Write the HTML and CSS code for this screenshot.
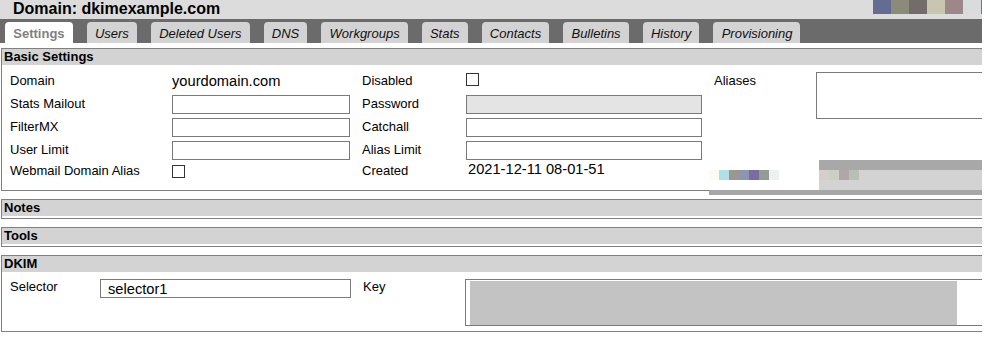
FILE: index.html
```html
<!DOCTYPE html>
<html lang="en">
<head>
    <meta charset="UTF-8">
    <title>Domain: dkimexample.com</title>
    <link rel="stylesheet" href="styles.css">
</head>
<body>
<div class="page">
    <div class="titlebar">
        <h1 class="title">Domain: dkimexample.com</h1>
        <div class="swatches">
            <span class="sw sw1"></span>
            <span class="sw sw2"></span>
            <span class="sw sw3"></span>
            <span class="sw sw4"></span>
            <span class="sw sw5"></span>
            <span class="sw sw6"></span>
        </div>
    </div>
    <ul class="tabs">
        <li class="tab active">Settings</li>
        <li class="tab">Users</li>
        <li class="tab">Deleted Users</li>
        <li class="tab">DNS</li>
        <li class="tab">Workgroups</li>
        <li class="tab">Stats</li>
        <li class="tab">Contacts</li>
        <li class="tab">Bulletins</li>
        <li class="tab">History</li>
        <li class="tab">Provisioning</li>
    </ul>

    <div class="panel">
        <div class="panel-head">Basic Settings</div>
        <div class="fields basic">
            <div class="label first">Domain</div>
            <div class="value">yourdomain.com</div>
            <div class="label">Disabled</div>
            <div><input type="checkbox" class="check"></div>
            <div class="label">Aliases</div>
            <textarea class="aliases"></textarea>

            <div class="label first">Stats Mailout</div>
            <div><input type="text" class="text"></div>
            <div class="label">Password</div>
            <div><input type="text" class="text wide" disabled></div>

            <div class="label first">FilterMX</div>
            <div><input type="text" class="text"></div>
            <div class="label">Catchall</div>
            <div><input type="text" class="text wide"></div>

            <div class="label first">User Limit</div>
            <div><input type="text" class="text"></div>
            <div class="label">Alias Limit</div>
            <div><input type="text" class="text wide"></div>

            <div class="label first low">Webmail Domain Alias</div>
            <div><input type="checkbox" class="check"></div>
            <div class="label low">Created</div>
            <div class="value date">2021-12-11 08-01-51</div>
        </div>

        <!-- redacted bits of the screenshot -->
        <div class="blur-strip">
            <span class="px" style="background:#fdfaf6"></span>
            <span class="px" style="background:#b0dfe9"></span>
            <span class="px" style="background:#9a9690"></span>
            <span class="px" style="background:#8c96b0"></span>
            <span class="px" style="background:#7a6ca0"></span>
            <span class="px" style="background:#949a98"></span>
            <span class="px" style="background:#eef0ee"></span>
        </div>
        <div class="blur-block">
            <span class="px" style="background:#d4d0c8"></span>
            <span class="px" style="background:#cccfc6"></span>
            <span class="px" style="background:#b0a8a8"></span>
            <span class="px" style="background:#b8bfb6"></span>
        </div>
        <div class="blur-bar"></div>
    </div>

    <div class="panel closed">
        <div class="panel-head">Notes</div>
    </div>

    <div class="panel closed">
        <div class="panel-head">Tools</div>
    </div>

    <div class="panel">
        <div class="panel-head">DKIM</div>
        <div class="fields dkim">
            <div class="label">Selector</div>
            <div><input type="text" class="text sel" value="selector1"></div>
            <div class="label">Key</div>
            <div class="keybox"><div class="keyblur"></div></div>
        </div>
    </div>
</div>
</body>
</html>
```

FILE: styles.css
```css
body {
    margin: 0;
    font-family: "Liberation Sans", Arial, sans-serif;
    font-size: 13px;
    color: #000;
    background: #fff;
}
.page {
    width: 982px;
    overflow: hidden;
}

/* title */
.titlebar {
    display: flex;
    justify-content: space-between;
    height: 19px;
    background: #dcdcdc;
}
.title {
    margin: 0;
    padding-left: 13px;
    font-size: 16px;
    line-height: 17px;
    font-weight: bold;
}
.swatches {
    display: flex;
    height: 14px;
    border-right: 1px solid #777;
}
.sw {
    width: 18px;
}
.sw1 { background: #646c94; }
.sw2 { background: #8c8a78; }
.sw3 { background: #746c6a; }
.sw4 { background: #c8c6b0; }
.sw5 { background: #9c8888; }
.sw6 { background: #d8dcdc; }

/* tabs */
.tabs {
    display: flex;
    gap: 14px;
    margin: 0;
    padding: 3px 0 0 5px;
    height: 21px;
    list-style: none;
    background: #6b6b6b;
}
.tab {
    padding: 4px 8px 2px 8.3px;
    line-height: 15px;
    background: #d3d3d3;
    border-radius: 4px 4px 0 0;
    font-style: italic;
    color: #111;
}
.tab.active {
    background: #fff;
    color: #808080;
    font-weight: bold;
    font-style: normal;
}

/* panels */
.panel {
    position: relative;
    margin: 5px 0 0 1px;
    border: 1px solid #808080;
    border-right: 0;
}
.panel + .panel {
    margin-top: 8px;
}
.panel.closed {
    padding-bottom: 2px;
}
.panel-head {
    padding-left: 2px;
    line-height: 16px;
    font-weight: bold;
    background: #d3d3d3;
}

.fields {
    display: grid;
}
.basic {
    grid-template-columns: 162px 190px 104px 248px 102px 1fr;
    grid-auto-rows: 23px;
    padding: 7px 0 3px 8px;
}
.dkim {
    grid-template-columns: 90px 263px 102px 1fr;
    grid-auto-rows: 47px;
    padding: 7px 0 5px 8px;
}
.first {
    grid-column: 1;
}
.label {
    padding-top: 1px;
    line-height: 15px;
}
.label.low {
    padding-top: 0;
    margin-top: -1px;
}
.dkim .label {
    padding-top: 0;
}
.value {
    padding-top: 1px;
    font-size: 14.67px;
    line-height: 17px;
}
.value.date {
    margin-top: -3px;
    padding-top: 0;
    padding-left: 2px;
}

.text {
    display: block;
    box-sizing: border-box;
    width: 178px;
    height: 19px;
    margin: 0;
    padding: 0 2px;
    border: 1px solid #7a7a7a;
    font: 14.67px "Liberation Sans", Arial, sans-serif;
    color: #000;
    background: #fff;
}
.text.wide {
    width: 236px;
}
.text[disabled] {
    background: #e4e4e4;
}
.text.sel {
    width: 251px;
    padding-left: 7px;
}
.check {
    display: block;
    -webkit-appearance: none;
    appearance: none;
    width: 13px;
    height: 13px;
    margin: 1px 0 0;
    border: 1px solid #333;
    background: #fff;
}
.aliases {
    display: block;
    grid-column: 6;
    grid-row: 1 / span 2;
    box-sizing: border-box;
    width: 240px;
    height: 47px;
    margin: 0;
    border: 1px solid #7a7a7a;
    resize: none;
}
.keybox {
    box-sizing: border-box;
    width: 600px;
    height: 47px;
    padding: 1px 0 0 4px;
    border: 1px solid #7a7a7a;
}
.keyblur {
    width: 487px;
    height: 44px;
    background: #c3c3c3;
}

/* pixelated leftovers over the settings box */
.px {
    width: 10px;
    height: 10px;
}
.blur-strip {
    position: absolute;
    left: 707px;
    top: 121px;
    display: flex;
}
.blur-block {
    position: absolute;
    left: 817px;
    top: 111px;
    display: flex;
    align-items: flex-start;
    width: 200px;
    height: 20px;
    border-top: 10px solid #a8a8a8;
    background: #d3d3d3;
}
.blur-bar {
    position: absolute;
    left: 707px;
    top: 141px;
    width: 300px;
    height: 5px;
    background: #a6a6a6;
}
```
